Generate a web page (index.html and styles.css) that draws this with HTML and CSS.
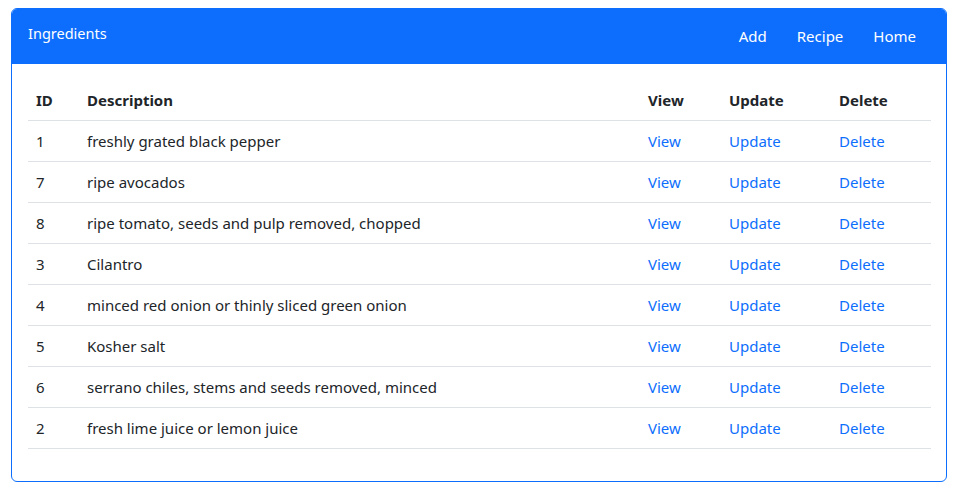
FILE: index.html
```html
<!DOCTYPE html>
<html lang="en">
<head>
<meta charset="utf-8">
<title>Ingredients</title>
<link rel="stylesheet" href="styles.css">
</head>
<body>
<div class="card">
  <div class="card-header">
    <div class="title">Ingredients</div>
    <nav class="nav">
      <a href="#">Add</a>
      <a href="#">Recipe</a>
      <a href="#">Home</a>
    </nav>
  </div>
  <div class="card-body">
    <table class="table">
      <colgroup>
        <col class="c-id"><col class="c-desc"><col class="c-view"><col class="c-upd"><col class="c-del">
      </colgroup>
      <thead>
        <tr><th>ID</th><th>Description</th><th>View</th><th>Update</th><th>Delete</th></tr>
      </thead>
      <tbody>
        <tr><td>1</td><td>freshly grated black pepper</td><td><a href="#">View</a></td><td><a href="#">Update</a></td><td><a href="#">Delete</a></td></tr>
        <tr><td>7</td><td>ripe avocados</td><td><a href="#">View</a></td><td><a href="#">Update</a></td><td><a href="#">Delete</a></td></tr>
        <tr><td>8</td><td>ripe tomato, seeds and pulp removed, chopped</td><td><a href="#">View</a></td><td><a href="#">Update</a></td><td><a href="#">Delete</a></td></tr>
        <tr><td>3</td><td>Cilantro</td><td><a href="#">View</a></td><td><a href="#">Update</a></td><td><a href="#">Delete</a></td></tr>
        <tr><td>4</td><td>minced red onion or thinly sliced green onion</td><td><a href="#">View</a></td><td><a href="#">Update</a></td><td><a href="#">Delete</a></td></tr>
        <tr><td>5</td><td>Kosher salt</td><td><a href="#">View</a></td><td><a href="#">Update</a></td><td><a href="#">Delete</a></td></tr>
        <tr><td>6</td><td>serrano chiles, stems and seeds removed, minced</td><td><a href="#">View</a></td><td><a href="#">Update</a></td><td><a href="#">Delete</a></td></tr>
        <tr><td>2</td><td>fresh lime juice or lemon juice</td><td><a href="#">View</a></td><td><a href="#">Update</a></td><td><a href="#">Delete</a></td></tr>
      </tbody>
    </table>
  </div>
</div>
</body>
</html>
```
FILE: styles.css
```css
* { box-sizing: border-box; }
body {
  margin: 8px 15px 0 11px;
  font-family: "Noto Sans", "Open Sans", sans-serif;
  font-size: 15px;
  line-height: 24px;
  color: #212529;
  background: #fff;
}
a { color: #0d6efd; text-decoration: none; }
.card {
  border: 1px solid #0d6efd;
  border-radius: 6px;
  overflow: hidden;
  width: 936px;
}
.card-header {
  background: #0d6efd;
  color: #fff;
  height: 55px;
  display: flex;
  justify-content: space-between;
  align-items: flex-start;
  padding: 0 15px 0 16px;
}
.title {
  font-size: 14.5px;
  padding-top: 12px;
}
.nav {
  display: flex;
  padding-top: 15px;
}
.nav a {
  color: #fff;
  padding: 0 15px;
}
.card-body {
  padding: 16px 15px 16px 16px;
}
.table {
  width: 100%;
  border-collapse: collapse;
  margin-bottom: 16px;
  table-layout: fixed;
}
.c-id { width: 51px; }
.c-view { width: 81px; }
.c-upd { width: 110px; }
.c-del { width: 100px; }
.table th, .table td {
  text-align: left;
  padding: 8px;
  border-bottom: 1px solid #dee2e6;
  white-space: nowrap;
}
.table th { font-weight: 700; }
```
